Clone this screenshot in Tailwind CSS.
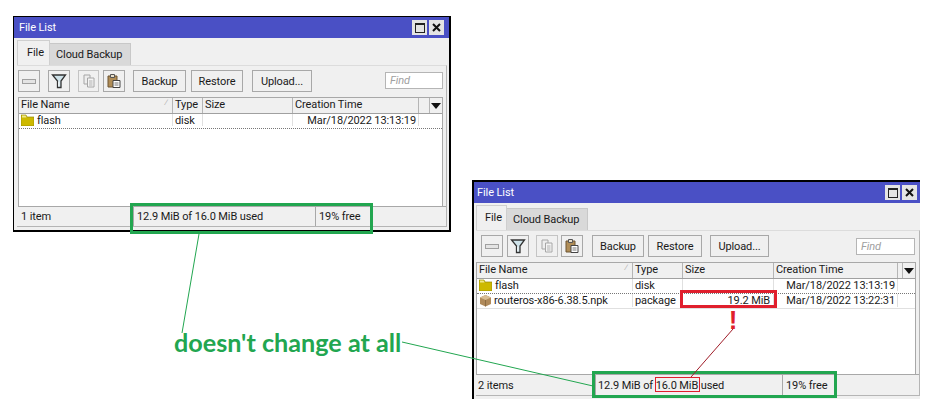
<!DOCTYPE html>
<html lang="en">
  <head>
    <meta charset="UTF-8" />
    <title>File List</title>
    <script src="https://cdn.jsdelivr.net/npm/@tailwindcss/browser@4"></script>
  </head>
  <body class="relative w-[927px] h-[406px] overflow-hidden bg-white font-['Roboto',sans-serif] text-[11px] tracking-[-0.1px] leading-none text-[#1a1a1a]">

    <!-- Window 1: before upload -->
    <div class="absolute left-[13px] top-[16px] w-[438px] h-[216px] flex flex-col bg-[#f0f0f0] border border-black border-r-2 border-b-2">
      <div class="h-[21px] shrink-0 flex items-center pl-[5px] pr-[5px] bg-[#4a50c5] text-white">
        <span>File List</span>
        <span class="ml-auto flex gap-[2px]">
          <span class="w-[15px] h-[15px] flex items-center justify-center bg-[#e4e4e4]"><span class="block w-[10px] h-[10px] border border-[#222] border-t-2"></span></span>
          <span class="w-[15px] h-[15px] flex items-center justify-center bg-[#e4e4e4]">
            <svg width="9" height="9" viewBox="0 0 9 9"><path d="M1 1l7 7M8 1L1 8" stroke="#111" stroke-width="2" /></svg>
          </span>
        </span>
      </div>
      <div class="h-[27px] shrink-0 flex items-end pl-[3px]">
        <div class="w-[33px] h-[25px] pl-[9px] pt-[6px] bg-[#f0f0f0] border border-b-0 border-[#cfcfcf]">File</div>
        <div class="w-[81px] h-[22px] pl-[6px] pt-[5px] bg-[#d9d9d9] border-t border-r border-[#c8c8c8] whitespace-nowrap">Cloud Backup</div>
      </div>
      <div class="flex-1 ml-[3px] mr-[2px] mb-[3px] flex flex-col border border-[#b5b5b5] border-l-0 border-t-[#dcdcdc]">
        <div class="h-[31px] shrink-0 flex items-start pt-[4px] pl-[1px]">
          <span class="w-[22px] h-[22px] border border-[#a8a8a8] flex items-center justify-center"><span class="block w-[14px] h-[5px] border border-[#a0a0a0] bg-[#e4e4e4]"></span></span>
          <span class="ml-[8px] w-[22px] h-[22px] border border-[#a8a8a8] flex items-center justify-center">
            <svg width="16" height="16" viewBox="0 0 16 16"><path d="M1.500 2h13L10 8v6.500H6.500V8z" fill="#cfe3ea" stroke="#333" stroke-width="1.3" /><path d="M7.800 8.500v5" stroke="#fff" /></svg>
          </span>
          <span class="ml-[8px] w-[21px] h-[22px] border border-[#c4c4c4] flex items-center justify-center">
            <svg width="14" height="14" viewBox="0 0 14 14"><path d="M2 1h6v9H2z" fill="#eee" stroke="#a6a6a6" /><path d="M5.500 4h6.500v9H5.500z" fill="#f4f4f4" stroke="#a6a6a6" /><path d="M7 7h3.500M7 9h3.500M7 11h3.500" stroke="#b0b0b0" /></svg>
          </span>
          <span class="ml-[4px] w-[22px] h-[22px] border border-[#a8a8a8] flex items-center justify-center">
            <svg width="16" height="16" viewBox="0 0 16 16"><path d="M2 3h9v11H2z" fill="#b08d57" stroke="#6c5433" /><path d="M4.500 1.500h4v3h-4z" fill="#e8e0cc" stroke="#555" /><path d="M7 7.500h7v7H7z" fill="#fff" stroke="#444" /><path d="M8.500 10h4M8.500 12h4" stroke="#777" /></svg>
          </span>
          <span class="ml-[8px] w-[53px] h-[22px] border border-[#a8a8a8] flex items-center justify-center">Backup</span>
          <span class="ml-[5px] w-[52px] h-[22px] border border-[#a8a8a8] flex items-center justify-center">Restore</span>
          <span class="ml-[9px] w-[60px] h-[22px] border border-[#a8a8a8] flex items-center justify-center">Upload...</span>
          <span class="ml-[73px] mt-[2px] w-[58px] h-[17px] border border-[#b5b5b5] bg-white pl-[4px] pt-[2px] italic text-[#a0a0a0]">Find</span>
        </div>
        <div class="flex-1 ml-[1px] mr-[3px] flex flex-col bg-white border border-[#a8a8a8] border-b-0">
          <div class="h-[16px] shrink-0 flex bg-[#f0f0f0] border-b border-[#a0a0a0] items-center">
            <span class="w-[154px] pl-[2px] border-r border-[#b5b5b5] h-full pt-[1px] flex justify-between pr-[5px]">File Name <i class="text-[8px] not-italic text-[#aaa]">∕</i></span>
            <span class="w-[30px] pl-[2px] border-r border-[#b5b5b5] h-full pt-[1px]">Type</span>
            <span class="w-[90px] pl-[2px] border-r border-[#b5b5b5] h-full pt-[1px]">Size</span>
            <span class="w-[126px] pl-[2px] border-r border-[#b5b5b5] h-full pt-[1px]">Creation Time</span>
            <span class="w-[11px] border-r border-[#b5b5b5] h-full"></span>
            <span class="flex-1 flex justify-center pt-[1px]"><svg width="10" height="6" viewBox="0 0 10 6"><path d="M0 0h10L5 6z" fill="#111" /></svg></span>
          </div>
          <div class="h-[15px] flex items-center border-b border-dotted border-[#777] pb-[2px]">
            <span class="w-[154px] pl-[2px] flex items-center gap-[3px] border-r border-[#e0e0e0] h-full">
              <svg width="13" height="12" viewBox="0 0 13 12"><path d="M0 1h5l1 2h7v9H0z" fill="#cdb900" stroke="#97890a" stroke-width=".7" /><path d="M1 1.500h3.500l1 2H1z" fill="#f0e88c" /></svg>
              flash</span>
            <span class="w-[30px] pl-[2px] border-r border-[#e0e0e0] h-full flex items-center">disk</span>
            <span class="w-[90px] border-r border-[#e0e0e0] h-full"></span>
            <span class="w-[126px] pr-[2px] border-r border-[#e0e0e0] h-full flex items-center justify-end">Mar/18/2022 13:13:19</span>
          </div>
        </div>
        <div class="h-[20px] shrink-0 flex items-center ml-[1px] border-t border-[#a8a8a8]">
          <span class="w-[115px] pl-[3px]">1 item</span>
          <span class="w-[182px] pl-[3px] h-full flex items-center border-l border-[#a8a8a8]">12.9 MiB of 16.0 MiB used</span>
          <span class="pl-[3px] h-full flex items-center border-l border-[#a8a8a8]">19% free</span>
        </div>
      </div>
    </div>

    <!-- Window 2: after upload -->
    <div class="absolute left-[472px] top-[180px] w-[448px] h-[219px] flex flex-col bg-[#f0f0f0] border-l-2 border-t-2 border-black">
      <div class="h-[21px] shrink-0 flex items-center pl-[3px] pr-[3px] bg-[#4a50c5] text-white">
        <span>File List</span>
        <span class="ml-auto flex gap-[2px]">
          <span class="w-[15px] h-[15px] flex items-center justify-center bg-[#e4e4e4]"><span class="block w-[10px] h-[10px] border border-[#222] border-t-2"></span></span>
          <span class="w-[15px] h-[15px] flex items-center justify-center bg-[#e4e4e4]">
            <svg width="9" height="9" viewBox="0 0 9 9"><path d="M1 1l7 7M8 1L1 8" stroke="#111" stroke-width="2" /></svg>
          </span>
        </span>
      </div>
      <div class="h-[27px] shrink-0 flex items-end pl-[2px]">
        <div class="w-[31px] h-[25px] pl-[8px] pt-[6px] bg-[#f0f0f0] border border-b-0 border-[#cfcfcf]">File</div>
        <div class="w-[81px] h-[22px] pl-[6px] pt-[5px] bg-[#d9d9d9] border-t border-r border-[#c8c8c8] whitespace-nowrap">Cloud Backup</div>
      </div>
      <div class="flex-1 ml-[2px] mb-[3px] flex flex-col border border-[#b5b5b5] border-l-0 border-t-[#dcdcdc]">
        <div class="h-[31px] shrink-0 flex items-start pt-[4px] pl-[5px]">
          <span class="w-[22px] h-[22px] border border-[#a8a8a8] flex items-center justify-center"><span class="block w-[14px] h-[5px] border border-[#a0a0a0] bg-[#e4e4e4]"></span></span>
          <span class="ml-[4px] w-[22px] h-[22px] border border-[#a8a8a8] flex items-center justify-center">
            <svg width="16" height="16" viewBox="0 0 16 16"><path d="M1.500 2h13L10 8v6.500H6.500V8z" fill="#cfe3ea" stroke="#333" stroke-width="1.3" /><path d="M7.800 8.500v5" stroke="#fff" /></svg>
          </span>
          <span class="ml-[7px] w-[22px] h-[22px] border border-[#c4c4c4] flex items-center justify-center">
            <svg width="14" height="14" viewBox="0 0 14 14"><path d="M2 1h6v9H2z" fill="#eee" stroke="#a6a6a6" /><path d="M5.500 4h6.500v9H5.500z" fill="#f4f4f4" stroke="#a6a6a6" /><path d="M7 7h3.500M7 9h3.500M7 11h3.500" stroke="#b0b0b0" /></svg>
          </span>
          <span class="ml-[3px] w-[22px] h-[22px] border border-[#a8a8a8] flex items-center justify-center">
            <svg width="16" height="16" viewBox="0 0 16 16"><path d="M2 3h9v11H2z" fill="#b08d57" stroke="#6c5433" /><path d="M4.500 1.500h4v3h-4z" fill="#e8e0cc" stroke="#555" /><path d="M7 7.500h7v7H7z" fill="#fff" stroke="#444" /><path d="M8.500 10h4M8.500 12h4" stroke="#777" /></svg>
          </span>
          <span class="ml-[9px] w-[52px] h-[22px] border border-[#a8a8a8] flex items-center justify-center">Backup</span>
          <span class="ml-[4px] w-[54px] h-[22px] border border-[#a8a8a8] flex items-center justify-center">Restore</span>
          <span class="ml-[8px] w-[59px] h-[22px] border border-[#a8a8a8] flex items-center justify-center">Upload...</span>
          <span class="ml-[87px] mt-[3px] w-[59px] h-[17px] border border-[#b5b5b5] bg-white pl-[4px] pt-[2px] italic text-[#a0a0a0]">Find</span>
        </div>
        <div class="flex-1 mr-[3px] flex flex-col bg-white border border-[#a8a8a8] border-b-0">
          <div class="h-[16px] shrink-0 flex bg-[#f0f0f0] border-b border-[#a0a0a0] items-center">
            <span class="w-[156px] pl-[2px] border-r border-[#b5b5b5] h-full pt-[1px] flex justify-between pr-[5px]">File Name <i class="text-[8px] not-italic text-[#aaa]">∕</i></span>
            <span class="w-[50px] pl-[2px] border-r border-[#b5b5b5] h-full pt-[1px]">Type</span>
            <span class="w-[91px] pl-[2px] border-r border-[#b5b5b5] h-full pt-[1px]">Size</span>
            <span class="w-[124px] pl-[2px] border-r border-[#b5b5b5] h-full pt-[1px]">Creation Time</span>
            <span class="w-[5px] border-r border-[#b5b5b5] h-full"></span>
            <span class="flex-1 flex justify-center pt-[1px]"><svg width="10" height="6" viewBox="0 0 10 6"><path d="M0 0h10L5 6z" fill="#111" /></svg></span>
          </div>
          <div class="h-[15px] flex items-center border-b border-dotted border-[#777] pb-[2px]">
            <span class="w-[156px] pl-[2px] flex items-center gap-[3px] border-r border-[#e0e0e0] h-full">
              <svg width="13" height="12" viewBox="0 0 13 12"><path d="M0 1h5l1 2h7v9H0z" fill="#cdb900" stroke="#97890a" stroke-width=".7" /><path d="M1 1.500h3.500l1 2H1z" fill="#f0e88c" /></svg>
              flash</span>
            <span class="w-[50px] pl-[2px] border-r border-[#e0e0e0] h-full flex items-center">disk</span>
            <span class="w-[91px] border-r border-[#e0e0e0] h-full"></span>
            <span class="w-[124px] pr-[2px] border-r border-[#e0e0e0] h-full flex items-center justify-end">Mar/18/2022 13:13:19</span>
          </div>
          <div class="h-[15px] flex items-center border-b border-[#e0e0e0] pb-[1px]">
            <span class="w-[156px] pl-[2px] flex items-center gap-[2px] border-r border-[#e0e0e0] h-full whitespace-nowrap">
              <svg width="13" height="13" viewBox="0 0 13 13"><path d="M6.500 1L12 3.500v6.500L6.500 12.500 1 10V3.500z" fill="#b08a5a" /><path d="M1 3.500l5.500 2.500L12 3.500 6.500 1z" fill="#d8bd94" /><path d="M6.500 6v6.500" stroke="#7d5f39" stroke-width=".7" /></svg>
              routeros-x86-6.38.5.npk</span>
            <span class="w-[50px] pl-[2px] border-r border-[#e0e0e0] h-full flex items-center">package</span>
            <span class="w-[91px] pr-[3px] border-r border-[#e0e0e0] h-full flex items-center justify-end">19.2 MiB</span>
            <span class="w-[124px] pr-[2px] border-r border-[#e0e0e0] h-full flex items-center justify-end">Mar/18/2022 13:22:31</span>
          </div>
        </div>
        <div class="h-[21px] shrink-0 flex items-center border-t border-[#a8a8a8]">
          <span class="w-[119px] pl-[2px]">2 items</span>
          <span class="w-[187px] pl-[2px] h-full flex items-center border-l border-[#a8a8a8]">12.9 MiB of 16.0 MiB used</span>
          <span class="pl-[3px] h-full flex items-center border-l border-[#a8a8a8]">19% free</span>
        </div>
      </div>
    </div>

    <!-- Annotations drawn over the windows -->
    <div class="absolute left-[130px] top-[203px] w-[243px] h-[31px] border-[3px] border-[#22a650]"></div>
    <div class="absolute left-[592px] top-[371px] w-[245px] h-[27px] border-[3px] border-[#22a650]"></div>
    <div class="absolute left-[680px] top-[290px] w-[97px] h-[18px] border-[3px] border-[#e01f2d]"></div>
    <div class="absolute left-[655px] top-[377px] w-[45px] h-[15px] border border-[#e01f2d]"></div>
    <svg class="absolute left-0 top-0" width="927" height="406" viewBox="0 0 927 406">
      <path d="M199 234L182 333M402 342L593 386" stroke="#22a650" fill="none" />
      <path d="M733 329L691 377" stroke="#a01c28" fill="none" />
    </svg>
    <div class="absolute left-[174px] top-[327px] font-['Lato',sans-serif] font-bold text-[25.200px] tracking-normal leading-[30px] text-[#22a650] whitespace-nowrap">doesn't change at all</div>
    <div class="absolute left-[724px] top-[310px] w-[18px] text-center font-['Liberation_Sans',sans-serif] font-bold text-[26px] leading-[20px] text-[#e01f2d]">!</div>
  </body>
</html>
